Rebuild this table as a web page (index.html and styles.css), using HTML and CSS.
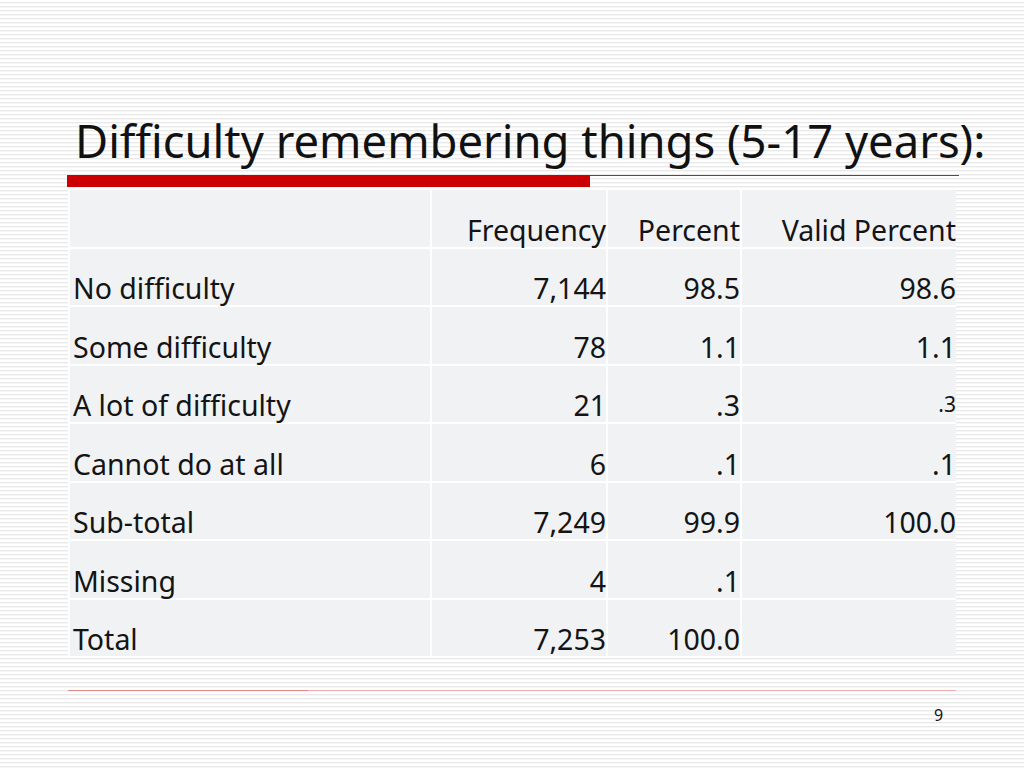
FILE: index.html
```html
<!DOCTYPE html>
<html>
<head>
<meta charset="utf-8">
<link rel="stylesheet" href="styles.css">
</head>
<body>
<div class="slide">
  <h1 class="title">Difficulty remembering things (5-17 years):</h1>
  <div class="rule">
    <div class="rule-thick"></div>
    <div class="rule-thin"></div>
  </div>
  <div class="table">
    <div class="cell"></div><div class="cell num">Frequency</div><div class="cell num">Percent</div><div class="cell num">Valid Percent</div>
    <div class="cell">No difficulty</div><div class="cell num">7,144</div><div class="cell num">98.5</div><div class="cell num">98.6</div>
    <div class="cell">Some difficulty</div><div class="cell num">78</div><div class="cell num">1.1</div><div class="cell num">1.1</div>
    <div class="cell">A lot of difficulty</div><div class="cell num">21</div><div class="cell num">.3</div><div class="cell num small">.3</div>
    <div class="cell">Cannot do at all</div><div class="cell num">6</div><div class="cell num">.1</div><div class="cell num">.1</div>
    <div class="cell">Sub-total</div><div class="cell num">7,249</div><div class="cell num">99.9</div><div class="cell num">100.0</div>
    <div class="cell">Missing</div><div class="cell num">4</div><div class="cell num">.1</div><div class="cell num"></div>
    <div class="cell">Total</div><div class="cell num">7,253</div><div class="cell num">100.0</div><div class="cell num"></div>
  </div>
  <div class="footer-line"></div>
  <div class="page-num">9</div>
</div>
</body>
</html>
```
FILE: styles.css
```css
html, body {
  margin: 0;
  padding: 0;
}
body {
  font-family: "Noto Sans", "Open Sans", sans-serif;
  color: #111;
}
.slide {
  width: 1024px;
  height: 768px;
  box-sizing: border-box;
  padding-top: 112px;
  background: repeating-linear-gradient(to bottom, #ffffff 0px, #ffffff 2px, #e9e9e9 2px, #e9e9e9 3px, #f7f7f7 3px, #f7f7f7 4px);
  overflow: hidden;
}
.title {
  margin: 0 0 0 75px;
  font-weight: normal;
  font-size: 45.4px;
  line-height: 56px;
  height: 63px;
  white-space: nowrap;
}
.rule {
  display: flex;
  margin-left: 67px;
  width: 892px;
  height: 15px;
}
.rule-thick {
  width: 523px;
  height: 12px;
  background: #cc0000;
}
.rule-thin {
  flex: 1;
  height: 1px;
  background: #e01010;
}
.table {
  display: grid;
  grid-template-columns: 360px 174px 132px 214px;
  grid-auto-rows: 56.5px;
  gap: 2px;
  margin-left: 68px;
  width: 888px;
  padding-left: 2px;
  box-sizing: border-box;
  background: #ffffff;
}
.cell {
  background: #f1f2f4;
  font-size: 28.5px;
  line-height: 34px;
  padding: 22.5px 0 0 3px;
  box-sizing: border-box;
  white-space: nowrap;
  color: #141414;
}
.num {
  text-align: right;
}
.small {
  font-size: 21px;
  padding-top: 21px;
}
.footer-line {
  margin: 34px 0 0 68px;
  width: 888px;
  height: 1px;
  background: linear-gradient(to right, #e08a8a 0, #e08a8a 240px, #f0b0b0 240px);
}
.page-num {
  margin: 14px 0 0 934px;
  font-size: 16px;
  line-height: 20px;
}
```
